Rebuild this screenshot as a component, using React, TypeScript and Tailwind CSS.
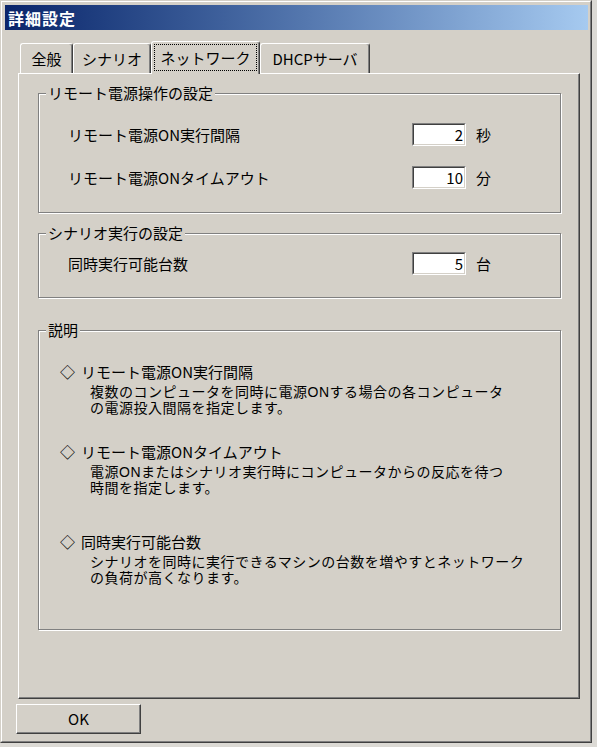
import React from 'react';

// 詳細設定ダイアログ (ネットワーク タブ)

interface SettingRowProps {
    label: string;
    value: string;
    unit: string;
}

const SettingRow: React.FC<SettingRowProps> = ({ label, value, unit }) => (
    <div className="flex h-[23px] items-center pl-[29px]">
        <div className="w-[344px] leading-[18px]">{label}</div>
        <div className="h-[23px] w-[54px] border border-b-white border-l-[#808080] border-r-white border-t-[#808080] bg-white">
            <div className="h-full border border-b-[#d4d0c8] border-l-[#404040] border-r-[#d4d0c8] border-t-[#404040] pr-[1px] text-right leading-[19px]">
                {value}
            </div>
        </div>
        <div className="ml-[10px] leading-[18px]">{unit}</div>
    </div>
);

interface HelpItemProps {
    title: string;
    lines: string[];
    className?: string;
}

const HelpItem: React.FC<HelpItemProps> = ({ title, lines, className }) => (
    <div className={className}>
        <div className="leading-[15px]">
            ◇<span className="ml-[6px]">{title}</span>
        </div>
        <div className="mt-[5px] pl-[30px] font-['Liberation_Sans','Noto_Sans_CJK_JP',sans-serif] text-[14px] leading-[16px] tracking-[0.5px]">
            {lines.map((line) => (
                <div key={line}>{line}</div>
            ))}
        </div>
    </div>
);

const tabs = [
    { name: '全般', width: 'w-[53px]' },
    { name: 'シナリオ', width: 'w-[78px]' },
    { name: 'ネットワーク', width: 'w-[109px]', active: true },
    { name: 'DHCPサーバ', width: 'w-[110px]' },
];

const App: React.FC = () => {
    return (
        <div className="h-[747px] w-[597px] bg-[#dcdad5] font-['Noto_Sans_CJK_JP',sans-serif] text-[15px] text-black">
            {/* window frame */}
            <div className="h-[743px] w-[592px] border border-b-[#404040] border-l-[#d4d0c8] border-r-[#404040] border-t-[#d4d0c8]">
                <div className="flex h-full flex-col border border-b-[#808080] border-l-white border-r-[#808080] border-t-white bg-[#d4d0c8] pb-[3px] pl-[3px] pr-[2px] pt-[3px]">
                    {/* title bar */}
                    <div className="flex h-[25px] items-center bg-gradient-to-r from-[#0a246a] to-[#a6caf0] pl-[3px]">
                        <span className="text-[16px] font-bold tracking-[1px] text-white">詳細設定</span>
                    </div>

                    {/* tabs */}
                    <div className="ml-[15px] mt-[11px] flex h-[32px] items-end">
                        {tabs.map((tab) =>
                            tab.active ? (
                                <div
                                    key={tab.name}
                                    className={`relative z-10 -mb-px flex h-[33px] ${tab.width} rounded-t-[3px] border-l border-r border-t border-l-white border-r-[#404040] border-t-white bg-[#d4d0c8] p-[2px] pb-[3px] shadow-[inset_-1px_0_0_#808080]`}
                                >
                                    <div className="flex flex-1 items-center justify-center border border-dotted border-black leading-[18px]">
                                        {tab.name}
                                    </div>
                                </div>
                            ) : (
                                <div
                                    key={tab.name}
                                    className={`flex h-[30px] ${tab.width} items-center justify-center rounded-t-[3px] border-l border-r border-t border-l-white border-r-[#404040] border-t-white leading-[18px] shadow-[inset_-1px_0_0_#808080]`}
                                >
                                    {tab.name}
                                </div>
                            )
                        )}
                    </div>

                    {/* tab panel */}
                    <div className="ml-[13px] h-[626px] w-[562px] border border-b-[#404040] border-l-white border-r-[#404040] border-t-white shadow-[inset_-1px_-1px_0_#808080]">
                        <fieldset className="m-0 ml-[19px] mt-[10px] w-[523px] min-w-0 border border-[#808080] p-0 pb-[23px] shadow-[inset_1px_1px_0_#fff,1px_1px_0_#fff]">
                            <legend className="ml-[7px] bg-[#d4d0c8] px-[2px] leading-[18px]">リモート電源操作の設定</legend>
                            <div className="flex flex-col gap-[20px] pt-[21px]">
                                <SettingRow label="リモート電源ON実行間隔" value="2" unit="秒" />
                                <SettingRow label="リモート電源ONタイムアウト" value="10" unit="分" />
                            </div>
                        </fieldset>

                        <fieldset className="m-0 ml-[19px] mt-[11px] w-[523px] min-w-0 border border-[#808080] p-0 pb-[22px] shadow-[inset_1px_1px_0_#fff,1px_1px_0_#fff]">
                            <legend className="ml-[7px] bg-[#d4d0c8] px-[2px] leading-[18px]">シナリオ実行の設定</legend>
                            <div className="pt-[10px]">
                                <SettingRow label="同時実行可能台数" value="5" unit="台" />
                            </div>
                        </fieldset>

                        <fieldset className="m-0 ml-[19px] mt-[23px] h-[309px] w-[523px] min-w-0 border border-[#808080] p-0 shadow-[inset_1px_1px_0_#fff,1px_1px_0_#fff]">
                            <legend className="ml-[7px] bg-[#d4d0c8] px-[2px] leading-[18px]">説明</legend>
                            <div className="pl-[21px] pt-[25px]">
                                <HelpItem
                                    title="リモート電源ON実行間隔"
                                    lines={['複数のコンピュータを同時に電源ONする場合の各コンピュータ', 'の電源投入間隔を指定します。']}
                                />
                                <HelpItem
                                    className="mt-[28px]"
                                    title="リモート電源ONタイムアウト"
                                    lines={['電源ONまたはシナリオ実行時にコンピュータからの反応を待つ', '時間を指定します。']}
                                />
                                <HelpItem
                                    className="mt-[38px]"
                                    title="同時実行可能台数"
                                    lines={['シナリオを同時に実行できるマシンの台数を増やすとネットワーク', 'の負荷が高くなります。']}
                                />
                            </div>
                        </fieldset>
                    </div>

                    {/* footer */}
                    <div className="ml-[11px] mt-[5px] flex h-[30px] w-[125px] items-center justify-center border border-b-[#404040] border-l-white border-r-[#404040] border-t-white shadow-[inset_-1px_-1px_0_#808080]">
                        OK
                    </div>
                </div>
            </div>
        </div>
    );
};

export default App;
